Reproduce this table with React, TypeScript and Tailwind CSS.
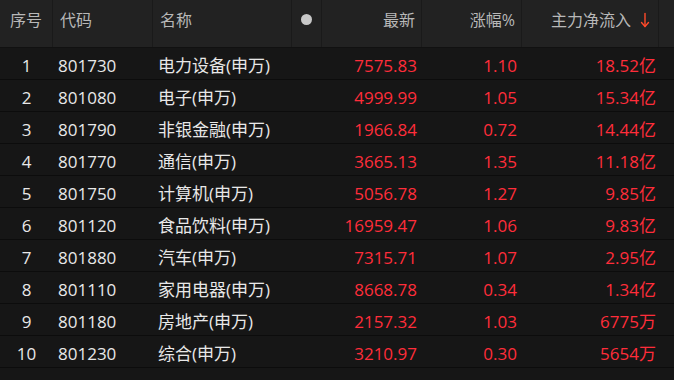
import React from "react";

const rows = [
  ["1", "801730", "电力设备(申万)", "7575.83", "1.10", "18.52亿"],
  ["2", "801080", "电子(申万)", "4999.99", "1.05", "15.34亿"],
  ["3", "801790", "非银金融(申万)", "1966.84", "0.72", "14.44亿"],
  ["4", "801770", "通信(申万)", "3665.13", "1.35", "11.18亿"],
  ["5", "801750", "计算机(申万)", "5056.78", "1.27", "9.85亿"],
  ["6", "801120", "食品饮料(申万)", "16959.47", "1.06", "9.83亿"],
  ["7", "801880", "汽车(申万)", "7315.71", "1.07", "2.95亿"],
  ["8", "801110", "家用电器(申万)", "8668.78", "0.34", "1.34亿"],
  ["9", "801180", "房地产(申万)", "2157.32", "1.03", "6775万"],
  ["10", "801230", "综合(申万)", "3210.97", "0.30", "5654万"],
];

export default function App() {
  return (
    <div
      className="w-[674px] h-[380px] bg-[#161616] overflow-hidden"
      style={{ fontFamily: '"Open Sans", "Noto Sans CJK SC", sans-serif' }}
    >
      <div className="flex h-[48px] bg-[#222222] text-[#b8b8b8] text-[16px] border-b border-[#111]">
        <div className="w-[53px] flex items-center justify-center pb-2 border-r border-[#1a1a1a]">序号</div>
        <div className="w-[100px] flex items-center pl-[7px] pb-2 border-r border-[#1a1a1a]">代码</div>
        <div className="w-[139px] flex items-center pl-[7px] pb-2 border-r border-[#1a1a1a]">名称</div>
        <div className="w-[30px] flex items-center justify-center pb-2 border-r border-[#1a1a1a]">
          <div className="w-[11px] h-[11px] rounded-full bg-[#c8c8c8]" />
        </div>
        <div className="w-[100px] flex items-center justify-end pr-[6px] pb-2 border-r border-[#1a1a1a]">最新</div>
        <div className="w-[100px] flex items-center justify-end pr-[6px] pb-2 border-r border-[#1a1a1a]">涨幅%</div>
        <div className="w-[137px] flex items-center justify-end pr-[8px] pb-2 border-r border-[#1a1a1a]">
          主力净流入
          <svg className="ml-[9px] mt-[1px]" width="10" height="16" viewBox="0 0 10 16" fill="none" stroke="#ff4a2a" strokeWidth="1.4" strokeLinecap="round" strokeLinejoin="round">
            <path d="M5 1.5V14.5" />
            <path d="M1.5 10.5L5 14.5L8.5 10.5" />
          </svg>
        </div>
        <div className="flex-1" />
      </div>
      {rows.map((r) => (
        <div key={r[0]} className="flex h-[32px] border-b border-[#0c0c0c] items-center pt-[5px] text-[17px]">
          <div className="w-[53px] text-center text-[#e8e8e8]">{r[0]}</div>
          <div className="w-[100px] pl-[5px] text-[#e8e8e8]">{r[1]}</div>
          <div className="w-[139px] pl-[5px] text-[#e8e8e8]">{r[2]}</div>
          <div className="w-[30px]" />
          <div className="w-[100px] text-right pr-[5px] text-[#ff2d3a]">{r[3]}</div>
          <div className="w-[100px] text-right pr-[5px] text-[#ff2d3a]">{r[4]}</div>
          <div className="w-[137px] text-right pr-[3px] text-[#ff2d3a]">{r[5]}</div>
        </div>
      ))}
    </div>
  );
}
